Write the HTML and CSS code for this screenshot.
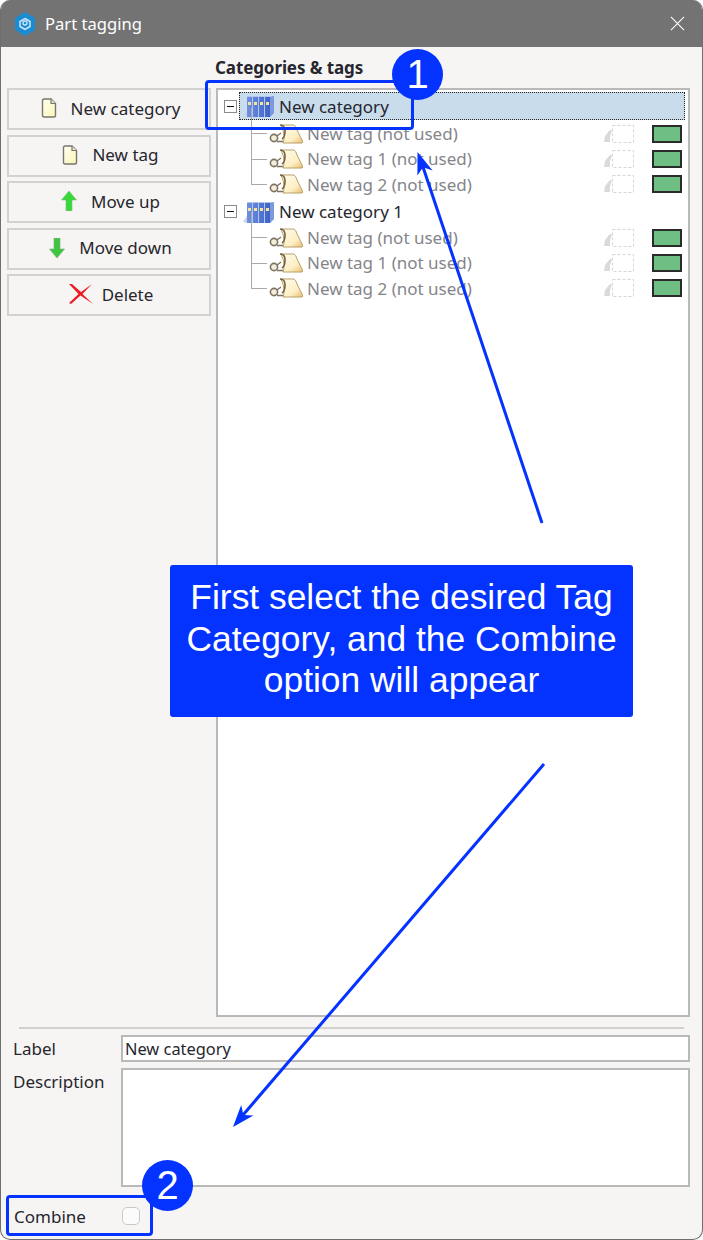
FILE: index.html
```html
<!DOCTYPE html>
<html lang="en">
<head>
  <meta charset="UTF-8" />
  <title>Part tagging</title>
  <link rel="stylesheet" href="styles.css">
</head>
<body>
  <svg class="defs" width="0" height="0">
    <defs>
      <linearGradient id="pagefill" x1="0" y1="0" x2="1" y2="1">
        <stop offset="0" stop-color="#fffff0"/>
        <stop offset="1" stop-color="#fbf6b8"/>
      </linearGradient>
      <linearGradient id="bookfill" x1="0" y1="0" x2="1" y2="0">
        <stop offset="0" stop-color="#6f90e2"/>
        <stop offset="1" stop-color="#3d63c8"/>
      </linearGradient>
      <linearGradient id="scrollfill" x1="0" y1="0" x2="1" y2="1">
        <stop offset="0" stop-color="#fffdf0"/>
        <stop offset=".65" stop-color="#fdeec4"/>
        <stop offset="1" stop-color="#e6bd6c"/>
      </linearGradient>
      <symbol id="page" viewBox="0 0 16 20">
        <path d="M1.500 2.500q0-1.500 1.500-1.500h7l4.500 4.500v12q0 1.500-1.500 1.500h-10q-1.500 0-1.500-1.500z" fill="url(#pagefill)" stroke="#77756c" stroke-width="1.400"/>
        <path d="M10 1v4.500h4.500" fill="#e9e7d2" stroke="#77756c" stroke-width="1.200"/>
      </symbol>
      <symbol id="books" viewBox="0 0 31 22">
        <path d="M0 21 4 15V22z" fill="#c9d4ec"/>
        <path d="M4 1h27v17l-4 4H4z" fill="#b4c4ea"/>
        <path d="M4 2h5v20H4zM10 2h5v20h-5zM16 2h5v20h-5zM22 2h5v20h-5z" fill="url(#bookfill)"/>
        <path d="M27 2 31 1v17l-4 4z" fill="#7d98dc"/>
        <path d="M5 7h3v3H5zM11 7h3v3h-3zM17 7h3v3h-3zM23 7h3v3h-3z" fill="#f4e59c"/>
      </symbol>
      <symbol id="scroll" viewBox="0 0 34 20">
        <path d="M12 1H25q2 1 3 5l6 12-1 1H14q3-7-2-18z" fill="url(#scrollfill)" stroke="#b9a06a"/>
        <path d="M11 1q5 0 5 6t-3 8" fill="none" stroke="#74603a" stroke-width="1.600"/>
        <circle cx="5" cy="14" r="3.600" fill="#f3eddc" stroke="#7d7360" stroke-width="1.600"/>
        <path d="M8 12 12 9M8 17.500h6" stroke="#7d7360" stroke-width="1.400"/>
      </symbol>
      <symbol id="stamp" viewBox="0 0 30 18">
        <path d="M0 17l1-6 4-5q2-2 3 0l-2 5v6z" fill="#dadada"/>
        <rect x="8.500" y="0.500" width="21" height="17" fill="#fff" stroke="#d2d6e2" stroke-dasharray="3 2"/>
      </symbol>
    </defs>
  </svg>

  <div class="window">
    <div class="titlebar">
      <svg class="app-icon" viewBox="0 0 20 24">
        <path d="M10 0 20 6v12l-10 6L0 18V6z" fill="#1b8bd2"/>
        <path d="M10 6.500 15 9.500v5l-5 3-5-3v-5z" fill="none" stroke="#cfe8f8" stroke-width="1.500"/>
        <circle cx="10" cy="11" r="2" fill="none" stroke="#cfe8f8" stroke-width="1.300"/>
      </svg>
      <span class="title">Part tagging</span>
      <svg class="close" viewBox="0 0 16 16">
        <path d="M1 1 15 15M15 1 1 15" stroke="#fff" stroke-width="1.200"/>
      </svg>
    </div>

    <div class="content">
      <div class="main">
        <div class="actions">
          <button class="btn"><svg class="btn-icon"><use href="#page"/></svg>New category</button>
          <button class="btn"><svg class="btn-icon"><use href="#page"/></svg>New tag</button>
          <button class="btn">
            <svg class="btn-icon" viewBox="0 0 16 20"><path d="M8 0 15.500 9H11V20H5V9H.5z" fill="#38d838" stroke="#7fbf7f" stroke-width=".6"/></svg>
            Move up
          </button>
          <button class="btn">
            <svg class="btn-icon" viewBox="0 0 16 20"><path d="M5 0h6v11h4.500L8 20 .5 11H5z" fill="#3fc63f" stroke="#7fa97f" stroke-width=".6"/></svg>
            Move down
          </button>
          <button class="btn">
            <svg class="btn-icon wide" viewBox="0 0 26 22"><path d="M1 1 4 1 13 9 24 1 14.500 11 25 21 12.500 12.500 3 21 1 20 10.500 11z" fill="#ec1c24"/></svg>
            Delete
          </button>
        </div>

        <div class="tree-col">
          <div class="tree-head">Categories &amp; tags</div>
          <div class="tree">
            <div class="cat selected">
              <span class="toggle"></span>
              <svg class="cat-icon"><use href="#books"/></svg>
              <span class="cat-label">New category</span>
            </div>
            <ul class="tags">
              <li class="tag"><svg class="tag-icon"><use href="#scroll"/></svg><span>New tag (not used)</span><svg class="tag-stamp"><use href="#stamp"/></svg><i class="swatch"></i></li>
              <li class="tag"><svg class="tag-icon"><use href="#scroll"/></svg><span>New tag 1 (not used)</span><svg class="tag-stamp"><use href="#stamp"/></svg><i class="swatch"></i></li>
              <li class="tag"><svg class="tag-icon"><use href="#scroll"/></svg><span>New tag 2 (not used)</span><svg class="tag-stamp"><use href="#stamp"/></svg><i class="swatch"></i></li>
            </ul>
            <div class="cat">
              <span class="toggle"></span>
              <svg class="cat-icon"><use href="#books"/></svg>
              <span class="cat-label">New category 1</span>
            </div>
            <ul class="tags">
              <li class="tag"><svg class="tag-icon"><use href="#scroll"/></svg><span>New tag (not used)</span><svg class="tag-stamp"><use href="#stamp"/></svg><i class="swatch"></i></li>
              <li class="tag"><svg class="tag-icon"><use href="#scroll"/></svg><span>New tag 1 (not used)</span><svg class="tag-stamp"><use href="#stamp"/></svg><i class="swatch"></i></li>
              <li class="tag"><svg class="tag-icon"><use href="#scroll"/></svg><span>New tag 2 (not used)</span><svg class="tag-stamp"><use href="#stamp"/></svg><i class="swatch"></i></li>
            </ul>
          </div>
        </div>
      </div>

      <hr class="sep">

      <div class="form">
        <label class="form-label">Label</label>
        <div class="field">New category</div>
        <label class="form-label">Description</label>
        <div class="field area"></div>
      </div>

      <div class="combine">
        <span class="combine-label">Combine</span>
        <span class="check"></span>
      </div>
    </div>

    <!-- annotations drawn over the screenshot -->
    <svg class="arrows" viewBox="0 0 703 1240">
      <path d="M542 523 422 164" stroke="#0433ff" stroke-width="3" fill="none"/>
      <path d="M417.500 152 432.600 170.500 423 167.200 417.400 175.500z" fill="#0433ff"/>
      <path d="M544 764 243 1115" stroke="#0433ff" stroke-width="3" fill="none"/>
      <path d="M233 1127 241.200 1105.100 243.400 1114.900 253.400 1115.500z" fill="#0433ff"/>
    </svg>
    <div class="hl hl-cat"></div>
    <div class="hl hl-combine"></div>
    <div class="badge badge-1">1</div>
    <div class="badge badge-2">2</div>
    <div class="callout">First select the desired Tag Category, and the Combine option will appear</div>
  </div>
</body>
</html>
```

FILE: styles.css
```css
:root {
  --blue: #0433ff;
  --line: #b9b9b9;
  --bg: #f7f5f3;
}

html, body {
  margin: 0;
  padding: 0;
  background: #fff;
}

body {
  width: 703px;
  height: 1240px;
  overflow: hidden;
  font-family: "Noto Sans", Arial, sans-serif;
  font-size: 17px;
  color: #26262e;
}

.defs {
  position: absolute;
}

.window {
  position: relative;
  box-sizing: border-box;
  width: 703px;
  height: 1240px;
  display: flex;
  flex-direction: column;
  background: var(--bg);
  border-radius: 10px;
  overflow: hidden;
  border: 1px solid #6e6e6e;
  border-top: none;
}

.titlebar {
  flex: none;
  height: 47px;
  margin: 0 -1px;
  display: flex;
  align-items: center;
  background: #737373;
  color: #fff;
  padding: 0 18px 0 15px;
}

.app-icon {
  width: 20px;
  height: 24px;
  margin-right: 10px;
}

.title {
  font-size: 16.600px;
}

.close {
  width: 15px;
  height: 15px;
  margin-left: auto;
}

.content {
  flex: 1;
  min-height: 0;
  display: flex;
  flex-direction: column;
  padding: 0 12px 0 6px;
}

.main {
  flex: 1;
  min-height: 0;
  display: flex;
  gap: 5px;
}

.actions {
  width: 204px;
  flex: none;
  display: flex;
  flex-direction: column;
  gap: 4.500px;
  padding-top: 41px;
}

.btn {
  height: 42px;
  display: flex;
  align-items: center;
  justify-content: center;
  gap: 14px;
  padding: 0 0 2px 3px;
  background: var(--bg);
  border: 2px solid #d2d2d2;
  font: inherit;
  color: inherit;
}

.btn-icon {
  width: 16px;
  height: 20px;
}

.btn-icon.wide {
  width: 26px;
  height: 22px;
  margin-right: -6px;
}

.tree-col {
  flex: 1;
  min-width: 0;
  display: flex;
  flex-direction: column;
}

.tree-head {
  height: 41px;
  box-sizing: border-box;
  padding-top: 9px;
  margin-left: -1px;
  font-size: 17px;
  line-height: 24px;
  font-weight: 700;
  white-space: nowrap;
  letter-spacing: -.1px;
}

.tree {
  flex: 1;
  background: #fff;
  border: 2px solid var(--line);
  padding: 2px 3px 0 5px;
}

.cat {
  height: 28px;
  display: flex;
  align-items: center;
  position: relative;
  margin-bottom: -1px;
}

.cat.selected {
  margin-bottom: 1px;
}

.cat::before {
  content: "";
  position: absolute;
  left: 16px;
  right: 0;
  top: 0;
  bottom: 0;
}

.selected::before {
  background: #c9dcec;
  outline: 1px dotted #222;
  outline-offset: -1px;
}

.toggle {
  position: relative;
  box-sizing: border-box;
  width: 13px;
  height: 13px;
  margin-left: 1px;
  border: 1px solid #8a8a8a;
  background: #fff;
}

.toggle::after {
  content: "";
  position: absolute;
  left: 2px;
  right: 2px;
  top: 5px;
  height: 1px;
  background: #111;
}

.cat-icon {
  position: relative;
  width: 31px;
  height: 22px;
  margin-left: 6px;
}

.cat-label {
  position: relative;
  margin-left: 5px;
}

.tags {
  list-style: none;
  margin: 0 0 1px;
  padding: 0;
}

.tag {
  position: relative;
  height: 25.330px;
  display: flex;
  align-items: center;
  padding-left: 46px;
  color: #85858a;
}

/* tree connector lines */
.tag::before {
  content: "";
  position: absolute;
  left: 28px;
  top: -13px;
  bottom: 12px;
  width: 15px;
  border-left: 1px solid #aaa;
  border-bottom: 1px solid #aaa;
}

.tag-icon {
  width: 34px;
  height: 20px;
  margin-right: 4px;
}

.tag-stamp {
  width: 30px;
  height: 18px;
  margin-left: auto;
}

.swatch {
  box-sizing: border-box;
  width: 30px;
  height: 18px;
  margin: 0 3px 0 18px;
  background: #6fbf85;
  border: 2px solid #2b2b2b;
}

.sep {
  flex: none;
  width: 665px;
  margin: 10px 0 6px 12px;
  border: none;
  border-top: 2px solid #d0d0d0;
}

.form {
  display: grid;
  grid-template-columns: 114px 1fr;
  grid-template-rows: 27px 119px;
  row-gap: 6px;
}

.form-label {
  padding-left: 6px;
  line-height: 27px;
}

.field {
  background: #fff;
  border: 2px solid var(--line);
  box-sizing: border-box;
  padding: 0 2px;
  line-height: 23px;
  font-size: 16.400px;
}

.combine {
  height: 46px;
  display: flex;
  align-items: center;
  padding: 0 0 0 7px;
  box-sizing: border-box;
  margin-top: 6px;
}

.combine-label {
  width: 108px;
}

.check {
  box-sizing: border-box;
  width: 18px;
  height: 18px;
  background: #fbfbfb;
  border: 1.500px solid #c8c8c8;
  border-radius: 5px;
}

/* annotation layer */
.arrows {
  position: absolute;
  left: -1px;
  top: 0;
  width: 703px;
  height: 1240px;
  pointer-events: none;
}

.hl {
  position: absolute;
  box-sizing: border-box;
  border: 3px solid var(--blue);
  border-radius: 4px;
}

.hl-cat {
  left: 204px;
  top: 80px;
  width: 209px;
  height: 50px;
}

.hl-combine {
  left: 5px;
  top: 1195px;
  width: 147px;
  height: 41px;
}

.badge {
  position: absolute;
  width: 51px;
  height: 51px;
  border-radius: 50%;
  background: var(--blue);
  color: #fff;
  font-family: "Liberation Sans", Arial, sans-serif;
  font-size: 40px;
  line-height: 51px;
  text-align: center;
}

.badge-1 {
  left: 391px;
  top: 49px;
}

.badge-2 {
  left: 141px;
  top: 1160px;
}

.callout {
  position: absolute;
  left: 169px;
  top: 565px;
  box-sizing: border-box;
  width: 463px;
  height: 152px;
  padding: 12px 5px;
  background: var(--blue);
  border-radius: 3px;
  color: #fff;
  font-family: "Liberation Sans", Arial, sans-serif;
  font-size: 35.400px;
  line-height: 41.500px;
  text-align: center;
}
```
